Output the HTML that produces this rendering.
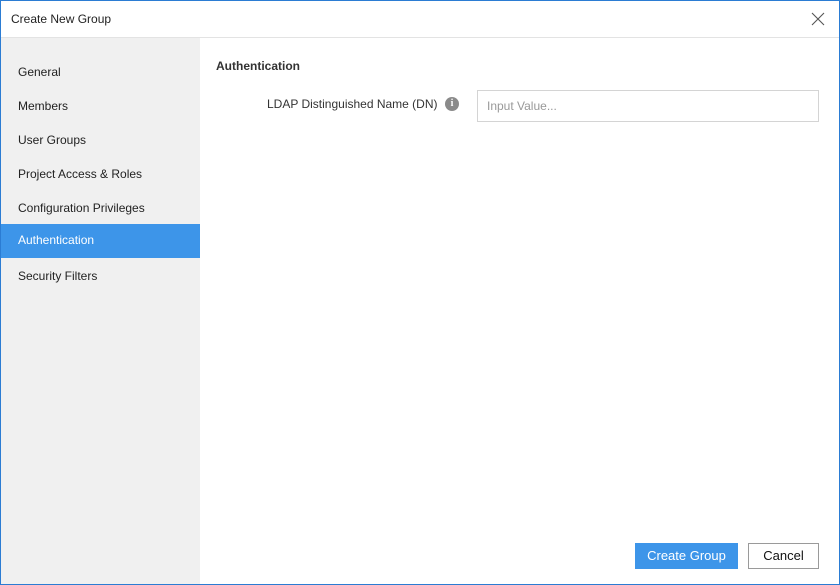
<!DOCTYPE html>
<html><head><meta charset="utf-8"><style>
*{margin:0;padding:0;box-sizing:border-box}
body{width:840px;height:585px;overflow:hidden;font-family:"Segoe UI","Liberation Sans",sans-serif;background:#fff}
.win{position:absolute;left:0;top:0;width:840px;height:585px;border:1px solid #2b7cd3;background:#fff}
.title{position:absolute;left:0;top:0;width:838px;height:37px;border-bottom:1px solid #e3e3e3;font-size:12px;color:#222;padding:11px 0 0 10px}
.close{position:absolute;right:14px;top:11px;width:14px;height:14px}
.side{position:absolute;left:0;top:37px;width:199px;height:546px;background:#f0f0f0}
.item{position:absolute;left:0;width:199px;height:34px;font-size:12px;color:#222;padding:9px 0 0 17px}
.item.act{background:#3d95e9;color:#fff}
.h{position:absolute;left:215px;top:58px;font-size:12px;font-weight:bold;color:#333}
.lbl{position:absolute;left:266px;top:96px;font-size:12px;color:#333}
.info{position:absolute;left:444px;top:96px;width:14px;height:14px;border-radius:50%;background:#8a8a8a;color:#fff;font-size:10px;font-weight:bold;text-align:center;line-height:14px;font-family:"Liberation Serif",serif}
.inp{position:absolute;left:476px;top:89px;width:342px;height:32px;border:1px solid #d4d4d4;font-size:12px;color:#999;padding:8px 0 0 9px}
.btn{position:absolute;top:542px;height:26px;font-size:13px;text-align:center;line-height:24px}
.b1{left:634px;width:103px;background:#3d95e9;color:#fff;border:1px solid #3d95e9}
.b2{left:747px;width:71px;background:#fff;color:#111;border:1px solid #9a9a9a}
</style></head><body><div class="win">
<div class="title">Create New Group
<svg class="close" viewBox="0 0 14 14"><path d="M1 1L13 13M13 1L1 13" stroke="#555" stroke-width="1.1"/></svg></div>
<div class="side">
<div class="item" style="top:18px">General</div>
<div class="item" style="top:52px">Members</div>
<div class="item" style="top:86px">User Groups</div>
<div class="item" style="top:120px">Project Access &amp; Roles</div>
<div class="item" style="top:154px">Configuration Privileges</div>
<div class="item act" style="top:186px">Authentication</div>
<div class="item" style="top:222px">Security Filters</div>
</div>
<div class="h">Authentication</div>
<div class="lbl">LDAP Distinguished Name (DN)</div>
<div class="info">i</div>
<div class="inp">Input Value...</div>
<div class="btn b1">Create Group</div>
<div class="btn b2">Cancel</div>
</div></body></html>
